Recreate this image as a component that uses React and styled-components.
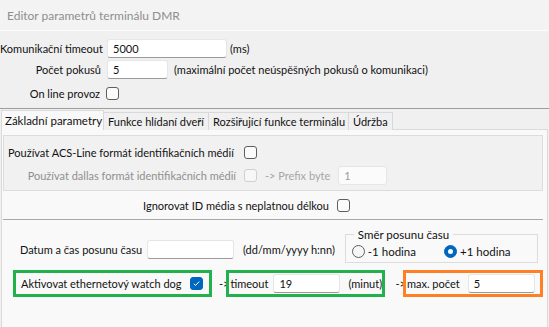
import React from 'react';
import styled, { createGlobalStyle, css } from 'styled-components';

const GlobalStyle = createGlobalStyle`
  html, body {
    margin: 0;
    padding: 0;
    background: #f0f0f0;
  }
  body {
    font-family: Lato, "Open Sans", "Liberation Sans", sans-serif;
    font-size: 11px;
    color: #111;
  }
`;

const Window = styled.div`
  width: 549px;
  height: 327px;
  overflow: hidden;
  background: #f0f0f0;
  display: flex;
  flex-direction: column;
`;

const TitleBar = styled.div`
  height: 30px;
  flex: none;
  background: #f3f3f3;
  border-bottom: 1px solid #fcfcfc;
  display: flex;
  align-items: center;
  padding-left: 7px;
  font-size: 12px;
  color: #8e8e8e;
`;

const TopForm = styled.div`
  display: flex;
  flex-direction: column;
  padding-top: 7px;
  height: 70px;
  flex: none;
`;

const Row = styled.div`
  display: flex;
  align-items: center;
  height: ${p => p.$h || 21}px;
  gap: ${p => p.$gap ?? 6}px;
  padding-left: ${p => p.$pl || 0}px;
  flex: none;
`;

const Label = styled.span`
  width: ${p => p.$w}px;
  flex: none;
  text-align: ${p => (p.$left ? 'left' : 'right')};
  white-space: nowrap;
  color: ${p => (p.$disabled ? '#8f8f8f' : 'inherit')};
`;

const Text = styled.span`
  flex: none;
  white-space: nowrap;
  margin-left: ${p => p.$ml || 0}px;
  color: ${p => (p.$disabled ? '#a6a6a6' : 'inherit')};
`;

const Input = styled.div`
  width: ${p => p.$w}px;
  height: 19px;
  box-sizing: border-box;
  flex: none;
  background: ${p => (p.$disabled ? '#fbfbfb' : '#ffffff')};
  border: 1px solid #e6e6e6;
  border-bottom-color: ${p => (p.$disabled ? '#e6e6e6' : '#9a9a9a')};
  border-radius: 3px;
  padding-left: 5px;
  display: flex;
  align-items: center;
  color: ${p => (p.$disabled ? '#9a9a9a' : 'inherit')};
`;

const Box = styled.span`
  width: 13px;
  height: 13px;
  box-sizing: border-box;
  flex: none;
  border-radius: 3px;
  border: 1px solid ${p => (p.$disabled ? '#cfcfcf' : '#5e5e5e')};
  background: ${p => (p.$disabled ? '#f7f7f7' : '#fbfbfb')};
  display: inline-flex;
  align-items: center;
  justify-content: center;
  ${p => p.$checked && css`
    background: #0067c0;
    border-color: #0067c0;
  `}
`;

const Checkbox = ({ checked, disabled }) => (
  <Box $checked={checked} $disabled={disabled}>
    {checked && (
      <svg width="9" height="9" viewBox="0 0 9 9">
        <path d="M1.8 4.8 L3.6 6.4 L7.2 2.6" fill="none" stroke="#fff" strokeWidth="1" />
      </svg>
    )}
  </Box>
);

const RadioCircle = styled.span`
  width: 13px;
  height: 13px;
  box-sizing: border-box;
  flex: none;
  border-radius: 50%;
  border: 1px solid #5e5e5e;
  background: #f6f6f6;
  display: inline-flex;
  align-items: center;
  justify-content: center;
  ${p => p.$on && css`
    background: #0067c0;
    border-color: #0067c0;
    &::after {
      content: '';
      width: 5px;
      height: 5px;
      border-radius: 50%;
      background: #fff;
    }
  `}
`;

const Radio = styled.label`
  display: flex;
  align-items: center;
  gap: 3px;
  white-space: nowrap;
  font-size: 11.5px;
`;

const Separator = styled.div`
  height: 1px;
  background: #9d9d9d;
  flex: none;
`;

const TabStrip = styled.div`
  display: flex;
  height: 20px;
  padding: 1px 0 0 2px;
  flex: none;
  align-items: flex-end;
`;

const Tab = styled.div`
  width: ${p => p.$w}px;
  box-sizing: border-box;
  height: ${p => (p.$active ? 20 : 18)}px;
  border: 1px solid #d9d9d9;
  border-bottom: none;
  margin-left: -1px;
  background: ${p => (p.$active ? '#f9f9f9' : '#f0f0f0')};
  padding-left: ${p => (p.$active ? 3 : 4)}px;
  display: flex;
  align-items: center;
  white-space: nowrap;
  position: relative;
  z-index: ${p => (p.$active ? 1 : 0)};
  font-size: ${p => (p.$active ? 11.5 : 11)}px;
`;

const Panel = styled.div`
  flex: 1;
  margin: -1px 1px 0 1px;
  background: #f9f9f9;
  border: 1px solid #dadada;
  border-bottom: none;
  padding: 5px 4px 0 1px;
  display: flex;
  flex-direction: column;
`;

const GroupBox = styled.div`
  height: 56px;
  flex: none;
  box-sizing: border-box;
  border: 1px solid #dcdcdc;
  background: #f1f1f1;
  display: flex;
  flex-direction: column;
  padding: 4px 0 0 4px;
`;

const PanelSeparator = styled.div`
  height: 1px;
  flex: none;
  background: #a8a8a8;
`;

const LowerGrid = styled.div`
  display: flex;
  flex-direction: column;
`;

const DateRow = styled.div`
  display: flex;
  align-items: center;
  padding: 13px 0 0 17px;
  height: 46px;
  box-sizing: border-box;
`;

const Fieldset = styled.fieldset`
  margin: 0 0 0 10px;
  width: 193px;
  height: 34px;
  box-sizing: border-box;
  border: 1px solid #dcdcdc;
  padding: 0 0 0 6px;
  display: flex;
  align-items: center;
  gap: 28px;
  position: relative;
  top: -4px;

  legend {
    padding: 0 4px;
    margin-left: 2px;
    line-height: 12px;
    font-size: 11.5px;
  }
`;

const ActionRow = styled.div`
  display: flex;
  align-items: center;
  padding-left: 10px;
  margin-top: 4px;
`;

const Highlight = styled.div`
  border: 3px solid ${p => p.$color};
  height: 27px;
  box-sizing: border-box;
  display: flex;
  align-items: center;
  gap: ${p => p.$gap || 5}px;
  padding-left: ${p => p.$pl || 4}px;
  width: ${p => p.$w}px;
  flex: none;
`;

const Arrow = styled.span`
  flex: none;
  white-space: nowrap;
  padding-left: ${p => p.$l || 0}px;
  margin-right: -3px;
`;

export default function App() {
  return (
    <>
      <GlobalStyle />
      <Window>
        <TitleBar>Editor parametrů terminálu DMR</TitleBar>
        <TopForm>
          <Row $h={21}>
            <Label $w={101}>Komunikační timeout</Label>
            <Input $w={120}>5000</Input>
            <Text $ml={-3}>(ms)</Text>
          </Row>
          <Row $h={21}>
            <Label $w={101}>Počet pokusů</Label>
            <Input $w={61}>5</Input>
            <Text>(maximální počet neúspěšných pokusů o komunikaci)</Text>
          </Row>
          <Row $h={26}>
            <Label $w={100}>On line provoz</Label>
            <Checkbox />
          </Row>
        </TopForm>
        <Separator />
        <TabStrip>
          <Tab $w={103} $active>Základní parametry</Tab>
          <Tab $w={106}>Funkce hlídaní dveří</Tab>
          <Tab $w={141}>Rozšiřující funkce terminálu</Tab>
          <Tab $w={45}>Údržba</Tab>
        </TabStrip>
        <Panel>
          <GroupBox>
            <Row $h={24} $gap={8}>
              <Label $w={228} $left>Používat ACS-Line formát identifikačních médií</Label>
              <Checkbox />
            </Row>
            <Row $h={22} $gap={8}>
              <Label $w={228} $disabled>Používat dallas formát identifikačních médií</Label>
              <Checkbox disabled />
              <Text $disabled>-&gt; Prefix byte</Text>
              <Input $w={49} $disabled>1</Input>
            </Row>
          </GroupBox>
          <Row $h={28} $gap={8}>
            <Label $w={326}>Ignorovat ID média s neplatnou délkou</Label>
            <Checkbox />
          </Row>
          <PanelSeparator />
          <LowerGrid>
            <DateRow>
              <Label $w={127} $left>Datum a čas posunu času</Label>
              <Input $w={87}>&nbsp;</Input>
              <Text $ml={9}>(dd/mm/yyyy h:nn)</Text>
              <Fieldset>
                <legend>Směr posunu času</legend>
                <Radio><RadioCircle />-1 hodina</Radio>
                <Radio><RadioCircle $on />+1 hodina</Radio>
              </Fieldset>
            </DateRow>
            <ActionRow>
              <Highlight $color="#22b14c" $w={199} $pl={5} $gap={8}>
                <Text>Aktivovat ethernetový watch dog</Text>
                <Checkbox checked />
              </Highlight>
              <Arrow $l={7}>-&gt;</Arrow>
              <Highlight $color="#22b14c" $w={159} $pl={1} $gap={5}>
                <Text>timeout</Text>
                <Input $w={67}>19</Input>
                <Text $ml={3}>(minut)</Text>
              </Highlight>
              <Arrow $l={10}>-&gt;</Arrow>
              <Highlight $color="#ff7f27" $w={140} $pl={1} $gap={8}>
                <Text>max. počet</Text>
                <Input $w={67}>5</Input>
              </Highlight>
            </ActionRow>
          </LowerGrid>
        </Panel>
      </Window>
    </>
  );
}
